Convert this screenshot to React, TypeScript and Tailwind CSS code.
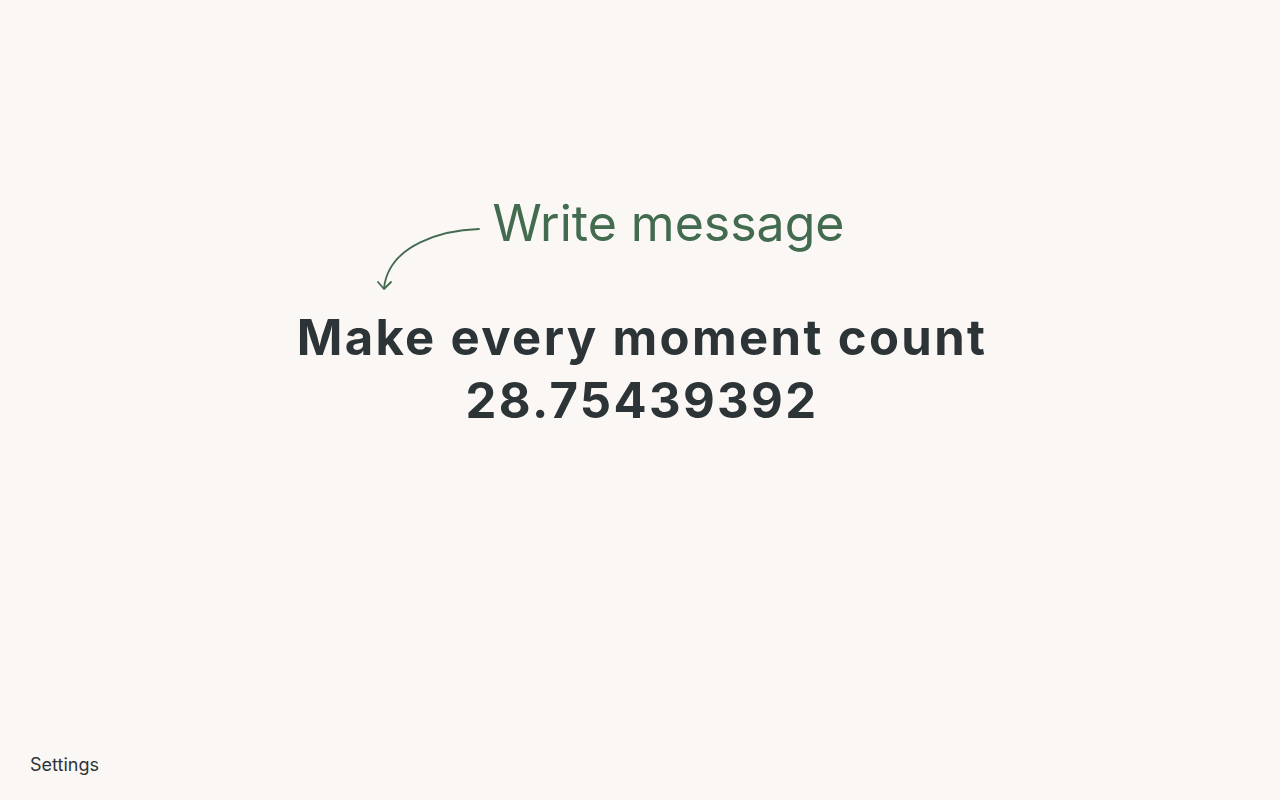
export default function App() {
  return (
    <div
      className="flex min-h-screen flex-col bg-[#faf7f4] text-[#2c3437]"
      style={{ fontFamily: "Inter, 'Noto Sans', sans-serif" }}
    >
      <main className="flex flex-1 flex-col items-center pt-[193px]">
        {/* prompt + arrow */}
        <div className="mr-[66px] flex items-start">
          <svg
            width="120"
            height="80"
            viewBox="0 0 120 80"
            fill="none"
            stroke="#436b50"
            strokeWidth="1.8"
            strokeLinecap="round"
            strokeLinejoin="round"
            className="mt-[27px]"
          >
            <path d="M110 9 C75 10 20 24 15 68" />
            <path d="M9 62 L15 69 L22 62" />
          </svg>
          <button className="ml-[3px] text-[50px] leading-[60px] text-[#436b50]">
            Write message
          </button>
        </div>

        <h1 className="ml-[4px] mt-[6px] text-center text-[49px] font-bold leading-[63px] tracking-[0.048em]">
          Make every moment count
          <br />
          28.75439392
        </h1>
      </main>

      <footer className="px-[30px] pb-[21px]">
        <button className="text-lg text-[#2c3437]">Settings</button>
      </footer>
    </div>
  )
}
